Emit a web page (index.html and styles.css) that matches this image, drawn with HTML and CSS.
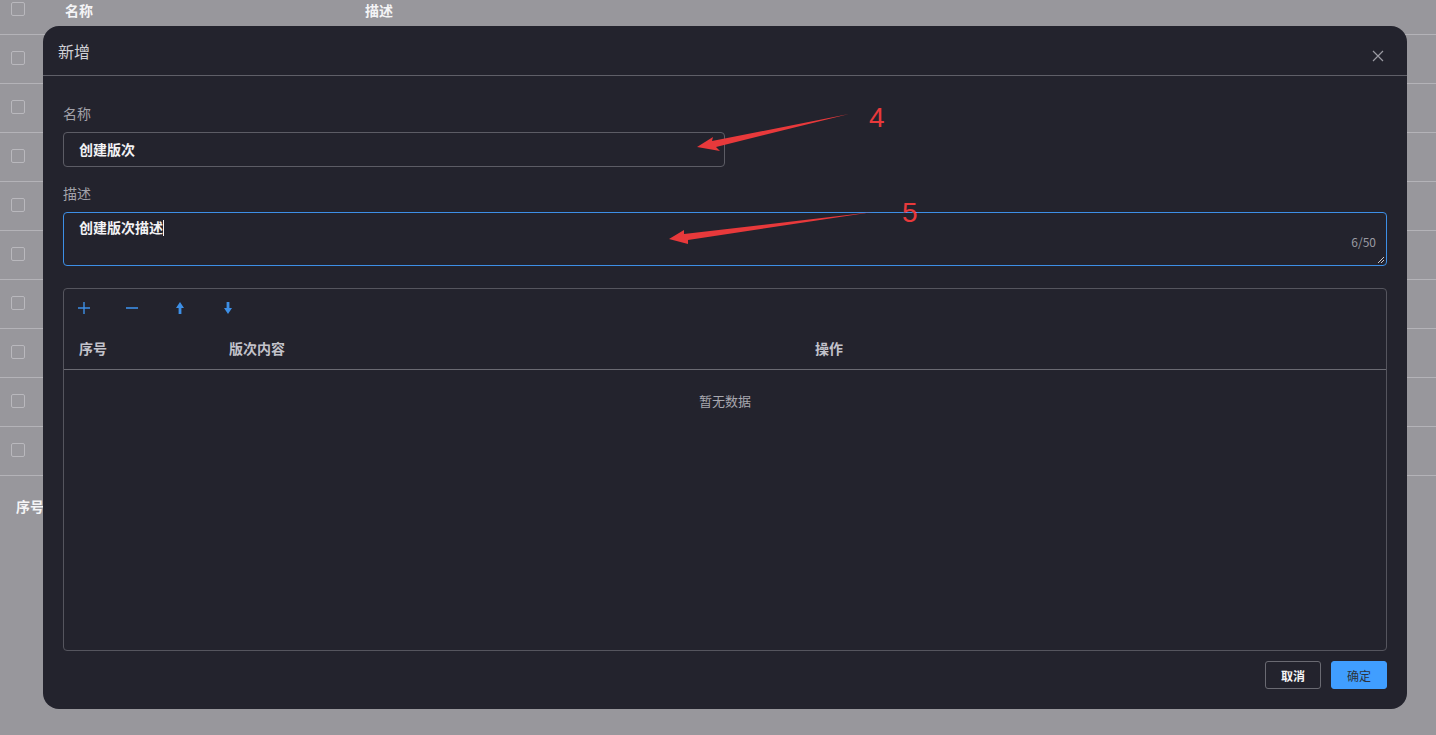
FILE: index.html
```html
<!DOCTYPE html>
<html lang="zh">
<head>
<meta charset="utf-8">
<link rel="stylesheet" href="styles.css">
</head>
<body>
<div class="page">
  <div class="bg-table">
    <div class="bg-row bg-head">
      <span class="cb"></span><span class="c-name">名称</span><span class="c-desc">描述</span>
    </div>
    <div class="bg-row"><span class="cb"></span></div>
    <div class="bg-row"><span class="cb"></span></div>
    <div class="bg-row"><span class="cb"></span></div>
    <div class="bg-row"><span class="cb"></span></div>
    <div class="bg-row"><span class="cb"></span></div>
    <div class="bg-row"><span class="cb"></span></div>
    <div class="bg-row"><span class="cb"></span></div>
    <div class="bg-row"><span class="cb"></span></div>
    <div class="bg-row"><span class="cb"></span></div>
  </div>
  <div class="bg-seq">序号</div>
</div>

<div class="modal">
  <div class="modal-head">
    <span class="modal-title">新增</span>
    <svg class="close" width="12" height="12" viewBox="0 0 12 12"><path d="M1 1L11 11M11 1L1 11" stroke="#9a9aa2" stroke-width="1.2" fill="none"/></svg>
  </div>
  <div class="modal-body">
    <div class="label">名称</div>
    <div class="input">创建版次</div>
    <div class="label label2">描述</div>
    <div class="textarea">
      <span class="ta-text">创建版次描述<span class="caret"></span></span>
      <span class="count">6/50</span>
      <svg class="grip" width="8" height="8" viewBox="0 0 8 8"><path d="M7 1L1 7M7 4L4 7" stroke="#c8c8d0" stroke-width="1"/></svg>
    </div>
    <div class="grid-box">
      <div class="toolbar">
        <svg width="14" height="14" viewBox="0 0 14 14"><path d="M7 1V13M1 7H13" stroke="#3d8fe6" stroke-width="1.4"/></svg>
        <svg width="14" height="14" viewBox="0 0 14 14"><path d="M1 7H13" stroke="#3d8fe6" stroke-width="1.6"/></svg>
        <svg width="14" height="14" viewBox="0 0 14 14"><path d="M7 1L3 7H5.6V13H8.4V7H11Z" fill="#3d8fe6"/></svg>
        <svg width="14" height="14" viewBox="0 0 14 14"><path d="M7 13L3 7H5.6V1H8.4V7H11Z" fill="#3d8fe6"/></svg>
      </div>
      <div class="grid-head">
        <span class="gh-seq">序号</span><span class="gh-content">版次内容</span><span class="gh-op">操作</span>
      </div>
      <div class="empty">暂无数据</div>
    </div>
    <div class="footer">
      <button class="btn btn-cancel">取消</button>
      <button class="btn btn-ok">确定</button>
    </div>
  </div>
</div>

<svg class="annot" width="1436" height="735" viewBox="0 0 1436 735">
  <polygon points="697,147 713,137 712,141 849,114 716,147 720,151" fill="#e8393b"/>
  <polygon points="669,239 684,230 684,234 873,212 688,240 688,244" fill="#e8393b"/>
</svg>
<span class="num num4">4</span>
<span class="num num5">5</span>
</body>
</html>
```

FILE: styles.css
```css
html, body {
  margin: 0;
  padding: 0;
}
body {
  width: 1436px;
  height: 735px;
  overflow: hidden;
  background: #98979c;
  font-family: "Noto Sans CJK SC", "Noto Sans", sans-serif;
  position: relative;
}
.page {
  width: 100%;
}
.bg-table {
  margin-top: -14px;
}
.bg-row {
  height: 48px;
  border-bottom: 1px solid #b4b3b8;
  display: flex;
  align-items: center;
  position: relative;
}
.cb {
  width: 12px;
  height: 12px;
  border: 1px solid #b9b8bd;
  border-radius: 2px;
  margin-left: 11px;
  margin-top: -3px;
}
.bg-head {
  color: #f4f4f6;
  font-weight: 700;
  font-size: 14px;
}
.c-name {
  margin-left: 40px;
  width: 300px;
}
.bg-seq {
  color: #f4f4f6;
  font-weight: 700;
  font-size: 14px;
  margin: 20px 0 0 16px;
}

.modal {
  position: absolute;
  left: 43px;
  top: 26px;
  width: 1364px;
  height: 683px;
  background: #23232d;
  border-radius: 16px;
  box-sizing: border-box;
  display: flex;
  flex-direction: column;
}
.modal-head {
  height: 49px;
  border-bottom: 1px solid #5f5f68;
  display: flex;
  align-items: center;
  justify-content: space-between;
  padding: 0 23px 0 15px;
}
.modal-title {
  color: #d0d0d6;
  font-size: 16px;
}
.close {
  margin-top: 10px;
}
.modal-body {
  padding: 27px 20px 0 20px;
  display: flex;
  flex-direction: column;
}
.label {
  color: #a2a2aa;
  font-size: 14px;
  line-height: 20px;
  margin-bottom: 9px;
}
.label2 {
  margin-top: 16px;
}
.input {
  width: 662px;
  height: 35px;
  box-sizing: border-box;
  border: 1px solid #5c5c65;
  border-radius: 4px;
  color: #f2f2f4;
  font-size: 14px;
  font-weight: 600;
  line-height: 33px;
  padding-left: 15px;
}
.textarea {
  height: 54px;
  box-sizing: border-box;
  border: 1px solid #3d8fe6;
  border-radius: 4px;
  position: relative;
  color: #f2f2f4;
  font-size: 14px;
  font-weight: 600;
  padding: 4px 15px;
  line-height: 20px;
}
.caret {
  display: inline-block;
  width: 1px;
  height: 16px;
  background: #f2f2f4;
  vertical-align: -3px;
}
.count {
  position: absolute;
  right: 10px;
  top: 19px;
  font-size: 12px;
  font-weight: 400;
  color: #9a9aa2;
}
.grip {
  position: absolute;
  right: 1px;
  bottom: 1px;
}
.grid-box {
  margin-top: 22px;
  height: 363px;
  box-sizing: border-box;
  border: 1px solid #55555e;
  border-radius: 4px;
}
.toolbar {
  height: 37px;
  display: flex;
  align-items: center;
  gap: 34px;
  padding-left: 13px;
}
.grid-head {
  height: 44px;
  box-sizing: border-box;
  border-bottom: 1px solid #6a6a72;
  display: flex;
  align-items: center;
  font-size: 14px;
  font-weight: 700;
  color: #c2c2ca;
}
.gh-seq {
  margin-left: 15px;
  width: 150px;
}
.gh-content {
  width: 586px;
}
.empty {
  text-align: center;
  color: #a8a8b0;
  font-size: 13px;
  line-height: 20px;
  margin-top: 21px;
}
.footer {
  display: flex;
  justify-content: flex-end;
  gap: 10px;
  margin-top: 10px;
}
.btn {
  width: 56px;
  height: 28px;
  border-radius: 3px;
  font-family: "Noto Sans CJK SC", sans-serif;
  font-size: 12px;
  padding: 0;
  cursor: pointer;
}
.btn-cancel {
  background: transparent;
  border: 1px solid #6a6a72;
  color: #f4f4f6;
  font-weight: 700;
}
.btn-ok {
  background: #409eff;
  border: 1px solid #409eff;
  color: #2c3340;
}

.annot {
  position: absolute;
  left: 0;
  top: 0;
  pointer-events: none;
}
.num {
  position: absolute;
  color: #e8393b;
  font-family: "Liberation Sans", "Noto Sans", sans-serif;
  font-size: 28px;
  line-height: 1;
}
.num4 {
  left: 869px;
  top: 104px;
}
.num5 {
  left: 902px;
  top: 199px;
}
```
